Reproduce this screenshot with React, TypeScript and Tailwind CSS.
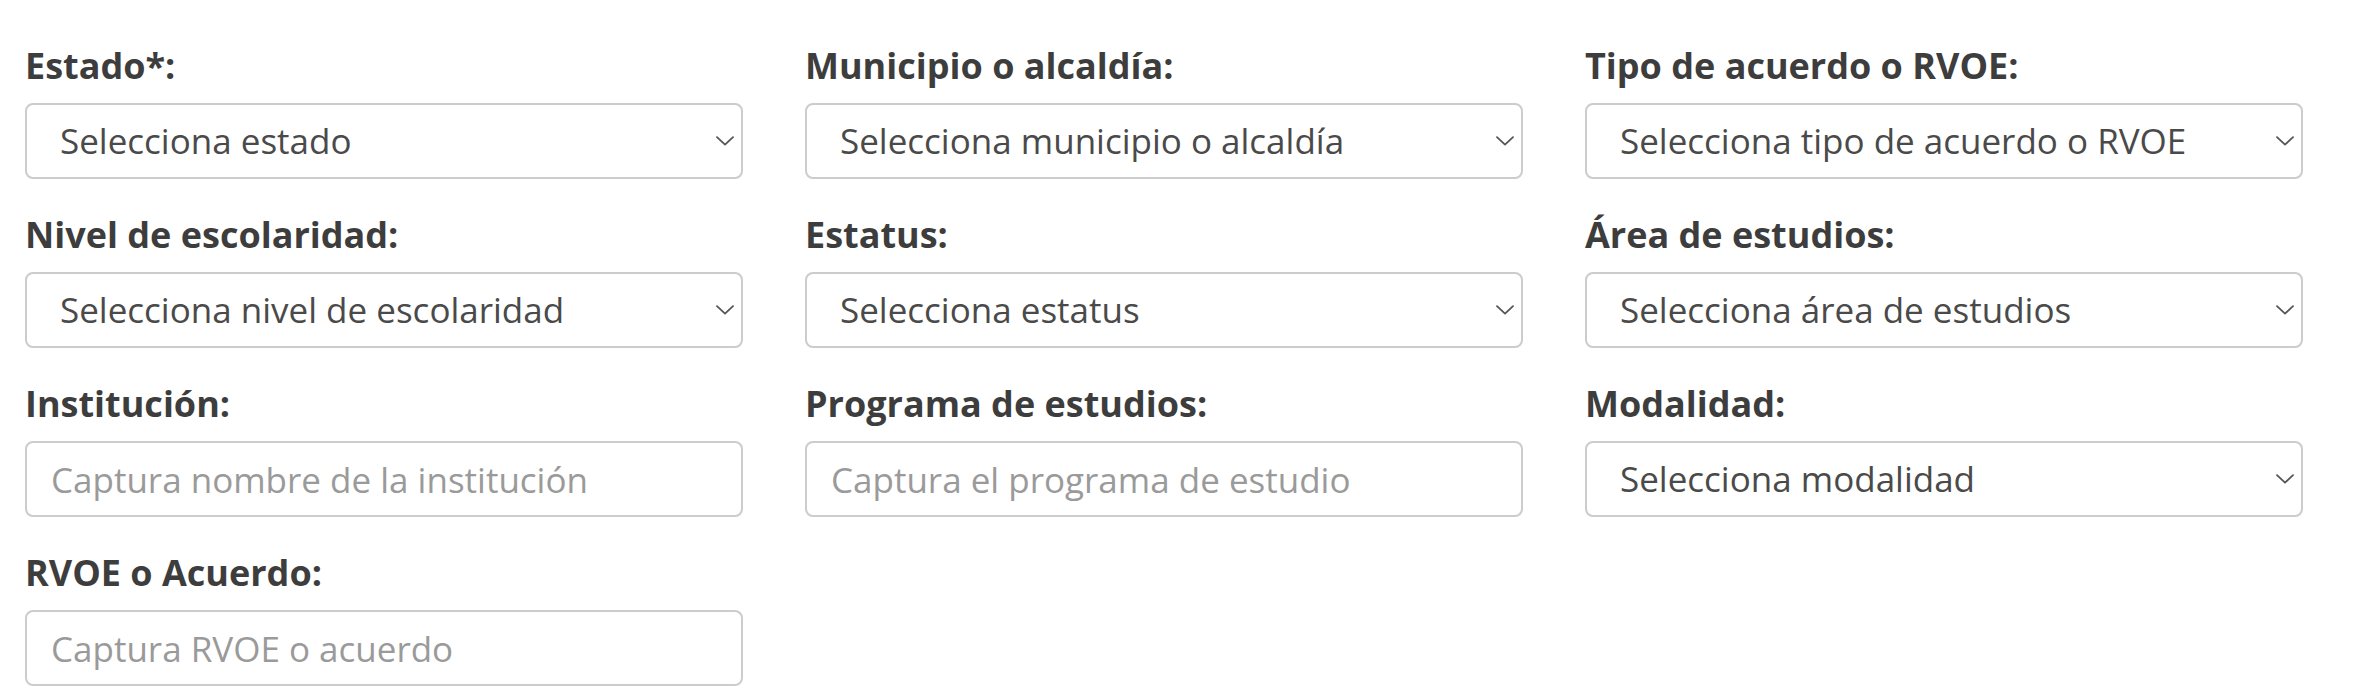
import React from "react";

type Field = { label: string; kind: "select" | "input"; text: string };

const fields: Field[] = [
  { label: "Estado*:", kind: "select", text: "Selecciona estado" },
  { label: "Municipio o alcaldía:", kind: "select", text: "Selecciona municipio o alcaldía" },
  { label: "Tipo de acuerdo o RVOE:", kind: "select", text: "Selecciona tipo de acuerdo o RVOE" },
  { label: "Nivel de escolaridad:", kind: "select", text: "Selecciona nivel de escolaridad" },
  { label: "Estatus:", kind: "select", text: "Selecciona estatus" },
  { label: "Área de estudios:", kind: "select", text: "Selecciona área de estudios" },
  { label: "Institución:", kind: "input", text: "Captura nombre de la institución" },
  { label: "Programa de estudios:", kind: "input", text: "Captura el programa de estudio" },
  { label: "Modalidad:", kind: "select", text: "Selecciona modalidad" },
  { label: "RVOE o Acuerdo:", kind: "input", text: "Captura RVOE o acuerdo" },
];

function Chevron() {
  return (
    <svg width="18" height="10" viewBox="0 0 18 10" fill="none" className="shrink-0">
      <path d="M1 1.2 L9 8.6 L17 1.2" stroke="#555" strokeWidth="1.8" strokeLinecap="round" strokeLinejoin="round" />
    </svg>
  );
}

function FieldBox({ f }: { f: Field }) {
  return (
    <div className="flex flex-col">
      <label className="text-[36px] leading-[42px] font-bold text-[#3d3d3d]">{f.label}</label>
      {f.kind === "select" ? (
        <div className="mt-[16px] h-[76px] border-2 border-[#cccccc] rounded-[8px] bg-white flex items-center justify-between pl-[33px] pr-[7px]">
          <span className="text-[35px] text-[#4a4a4a] whitespace-nowrap">{f.text}</span>
          <Chevron />
        </div>
      ) : (
        <input
          className="mt-[16px] h-[76px] border-2 border-[#cccccc] rounded-[8px] bg-white px-[24px] text-[35px] text-[#4a4a4a] placeholder:text-[#9a9a9a] outline-none"
          placeholder={f.text}
          style={{ fontFamily: "'Open Sans', sans-serif" }}
        />
      )}
    </div>
  );
}

export default function App() {
  return (
    <div
      className="w-[2370px] h-[700px] bg-white pl-[25px] pt-[45px]"
      style={{ fontFamily: "'Open Sans', 'Noto Sans', sans-serif" }}
    >
      <div className="grid grid-cols-[718px_718px_718px] gap-x-[62px] gap-y-[35px]">
        {fields.map((f, i) => (
          <FieldBox key={i} f={f} />
        ))}
      </div>
    </div>
  );
}
